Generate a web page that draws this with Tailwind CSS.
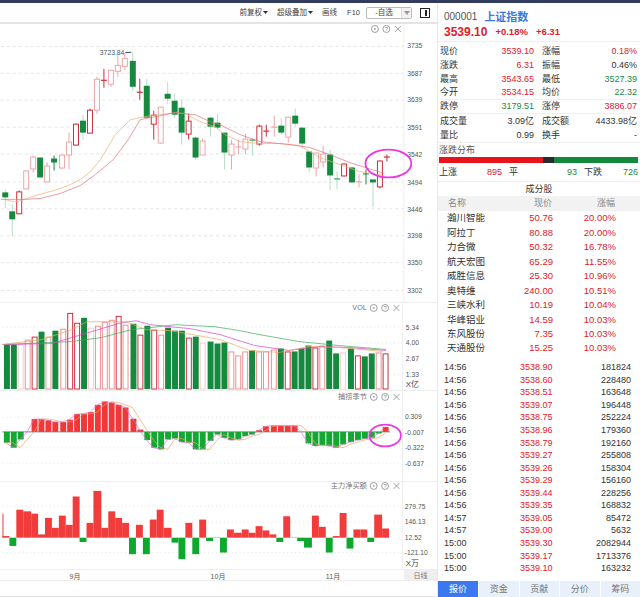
<!DOCTYPE html>
<html lang="en">
<head>
<meta charset="UTF-8">
<title>上证指数</title>
<script src="https://cdn.jsdelivr.net/npm/@tailwindcss/browser@4"></script>
</head>
<body class="bg-white overflow-hidden">
<div class="w-[640px] h-[597px] overflow-hidden flex flex-col font-['Liberation_Sans','Noto_Sans_CJK_SC',sans-serif] text-[9px] leading-none text-[#333]">
  <div class="h-[3px] shrink-0 bg-[#323c5c]"></div>
  <div class="flex flex-1 min-h-0">
    <!-- left: chart panes -->
    <div class="w-[437px] shrink-0 flex flex-col">
      <div class="h-[21px] shrink-0 border-b-2 border-[#e4e4e4] flex items-center justify-end pr-[7px] text-[7.5px] text-[#444]">
        <span class="flex items-center gap-[1px]">前复权<svg width="5" height="3"><path d="M0 0h5L2.5 3z" fill="#333"/></svg></span>
        <span class="flex items-center gap-[1px] ml-[9px]">超级叠加<svg width="5" height="3"><path d="M0 0h5L2.5 3z" fill="#333"/></svg></span>
        <span class="ml-[9px]">画线</span>
        <span class="ml-[10px]">F10</span>
        <span class="flex items-center w-[46px] h-[12px] ml-[6px] border border-[#bbb] rounded-[2px]">
          <span class="flex-1 text-center">-自选</span>
          <span class="w-[10px] h-full border-l border-[#ddd] bg-[#f2f2f2] flex items-center justify-center"><svg width="6" height="4"><path d="M0 0h6L3 4z" fill="#999"/></svg></span>
        </span>
        <svg class="ml-[8px]" width="10" height="10"><rect x=".5" y=".5" width="9" height="9" fill="none" stroke="#222"/><rect x="5" y="2" width="2" height="6" fill="#222"/></svg>
      </div>
      <svg id="main" class="block shrink-0 border-b border-[#eee]" width="437" height="279" viewBox="0 24 437 279"></svg>
      <svg id="vol" class="block shrink-0 border-b border-[#eee]" width="437" height="88" viewBox="0 303 437 88"></svg>
      <svg id="macd" class="block shrink-0 border-b border-[#eee]" width="437" height="91" viewBox="0 391 437 91"></svg>
      <svg id="flow" class="block shrink-0 border-b border-[#eee]" width="437" height="88" viewBox="0 482 437 88"></svg>
      <div class="h-[11px] shrink-0 flex border-b border-[#eee]">
        <svg id="dates" class="block" width="404" height="11" viewBox="0 570 404 11"></svg>
        <div class="flex-1 bg-[#efefef] text-[#777] text-[7px] text-center leading-[11px]">日线</div>
      </div>
      <div class="flex-1 border-b border-[#e4e4e4]"></div>
    </div>
    <!-- right: quote panel -->
    <div class="flex-1 min-w-0 border-l border-[#e8e8e8] flex flex-col">
      <div class="h-[39px] shrink-0 border-b border-[#eee] pl-[6px] pt-[8px]">
        <div class="flex items-center gap-[7px] h-[12px]">
          <span class="text-[10px] text-[#555]">000001</span>
          <span class="text-[11px] font-bold text-[#3b78e0]">上证指数</span>
        </div>
        <div class="flex items-center gap-[8px] mt-[3px] font-bold text-[#e0202c]">
          <span class="text-[12px]">3539.10</span>
          <span class="text-[9.5px]">+0.18%</span>
          <span class="text-[9.5px]">+6.31</span>
        </div>
      </div>
      <div class="pl-[2px] pr-[3px] pt-[2px] shrink-0">
        <div class="flex h-[14px] items-center justify-between"><div class="w-[94px] flex justify-between"><span>现价</span><span class="text-[#e0202c]">3539.10</span></div><div class="w-[95px] flex justify-between"><span>涨幅</span><span class="text-[#e0202c]">0.18%</span></div></div>
        <div class="flex h-[14px] items-center justify-between"><div class="w-[94px] flex justify-between"><span>涨跌</span><span class="text-[#e0202c]">6.31</span></div><div class="w-[95px] flex justify-between"><span>振幅</span><span>0.46%</span></div></div>
        <div class="flex h-[14px] items-center justify-between"><div class="w-[94px] flex justify-between"><span>最高</span><span class="text-[#e0202c]">3543.65</span></div><div class="w-[95px] flex justify-between"><span>最低</span><span class="text-[#1a8a4a]">3527.39</span></div></div>
        <div class="flex h-[14px] items-center justify-between border-b border-[#f0f0f0]"><div class="w-[94px] flex justify-between"><span>今开</span><span class="text-[#e0202c]">3534.15</span></div><div class="w-[95px] flex justify-between"><span>均价</span><span class="text-[#1a8a4a]">22.32</span></div></div>
        <div class="flex h-[14px] items-center justify-between border-b border-[#f0f0f0]"><div class="w-[94px] flex justify-between"><span>跌停</span><span class="text-[#1a8a4a]">3179.51</span></div><div class="w-[95px] flex justify-between"><span>涨停</span><span class="text-[#e0202c]">3886.07</span></div></div>
        <div class="flex h-[14px] items-center justify-between"><div class="w-[94px] flex justify-between"><span>成交量</span><span>3.09亿</span></div><div class="w-[95px] flex justify-between"><span>成交额</span><span>4433.98亿</span></div></div>
        <div class="flex h-[14px] items-center justify-between"><div class="w-[94px] flex justify-between"><span>量比</span><span>0.99</span></div><div class="w-[95px] flex justify-between"><span>换手</span><span>-</span></div></div>
      </div>
      <div class="h-[15px] shrink-0 pl-[1px] flex items-center text-[#555] border-t border-[#f0f0f0]">涨跌分布</div>
      <div class="h-[6px] shrink-0 ml-[1px] mr-[2px] flex">
        <div class="w-[104px] bg-[#e8141c]"></div>
        <div class="w-[11px] bg-[#2b2b2b]"></div>
        <div class="flex-1 bg-[#128a3a]"></div>
      </div>
      <div class="h-[19px] shrink-0 flex items-center pl-[1px] pr-[2px] border-b border-[#eee]">
        <span class="w-[63px] flex justify-between"><span>上涨</span><span class="text-[#e0202c]">895</span></span>
        <span class="w-[68px] ml-[7px] flex justify-between"><span>平</span><span class="text-[#1a8a4a]">93</span></span>
        <span class="flex-1 ml-[7px] flex justify-between"><span>下跌</span><span class="text-[#1a8a4a]">726</span></span>
      </div>
      <div class="h-[14px] shrink-0 text-center leading-[15px]">成分股</div>
      <div class="h-[15px] shrink-0 bg-[#f2f2f2] flex items-center text-[#888] pl-[10px]">
        <span class="w-[46px]">名称</span><span class="w-[58px] text-right">现价</span><span class="w-[63px] text-right">涨幅</span>
      </div>
      <div class="shrink-0 pl-[9px] text-[9.5px] text-[#e0202c]">
        <div class="flex items-center h-[14.45px]"><span class="w-[56px] text-[#333]">瀚川智能</span><span class="w-[50px] text-right">50.76</span><span class="w-[63px] text-right">20.00%</span></div>
        <div class="flex items-center h-[14.45px]"><span class="w-[56px] text-[#333]">阿拉丁</span><span class="w-[50px] text-right">80.88</span><span class="w-[63px] text-right">20.00%</span></div>
        <div class="flex items-center h-[14.45px]"><span class="w-[56px] text-[#333]">力合微</span><span class="w-[50px] text-right">50.32</span><span class="w-[63px] text-right">16.78%</span></div>
        <div class="flex items-center h-[14.45px]"><span class="w-[56px] text-[#333]">航天宏图</span><span class="w-[50px] text-right">65.29</span><span class="w-[63px] text-right">11.55%</span></div>
        <div class="flex items-center h-[14.45px]"><span class="w-[56px] text-[#333]">威胜信息</span><span class="w-[50px] text-right">25.30</span><span class="w-[63px] text-right">10.96%</span></div>
        <div class="flex items-center h-[14.45px]"><span class="w-[56px] text-[#333]">奥特维</span><span class="w-[50px] text-right">240.00</span><span class="w-[63px] text-right">10.51%</span></div>
        <div class="flex items-center h-[14.45px]"><span class="w-[56px] text-[#333]">三峡水利</span><span class="w-[50px] text-right">10.19</span><span class="w-[63px] text-right">10.04%</span></div>
        <div class="flex items-center h-[14.45px]"><span class="w-[56px] text-[#333]">华峰铝业</span><span class="w-[50px] text-right">14.59</span><span class="w-[63px] text-right">10.03%</span></div>
        <div class="flex items-center h-[14.45px]"><span class="w-[56px] text-[#333]">东风股份</span><span class="w-[50px] text-right">7.35</span><span class="w-[63px] text-right">10.03%</span></div>
        <div class="flex items-center h-[14.45px]"><span class="w-[56px] text-[#333]">天通股份</span><span class="w-[50px] text-right">15.25</span><span class="w-[63px] text-right">10.03%</span></div>
      </div>
      <div class="shrink-0 mt-[6px] pl-[6px] pr-[9px]">
        <div class="flex items-center h-[12.57px]"><span class="w-[76px]">14:56</span><span class="text-[#e0202c]">3538.90</span><span class="flex-1 text-right">181824</span></div>
        <div class="flex items-center h-[12.57px]"><span class="w-[76px]">14:56</span><span class="text-[#e0202c]">3538.60</span><span class="flex-1 text-right">228480</span></div>
        <div class="flex items-center h-[12.57px]"><span class="w-[76px]">14:56</span><span class="text-[#e0202c]">3538.51</span><span class="flex-1 text-right">163648</span></div>
        <div class="flex items-center h-[12.57px]"><span class="w-[76px]">14:56</span><span class="text-[#e0202c]">3539.07</span><span class="flex-1 text-right">196448</span></div>
        <div class="flex items-center h-[12.57px]"><span class="w-[76px]">14:56</span><span class="text-[#e0202c]">3538.75</span><span class="flex-1 text-right">252224</span></div>
        <div class="flex items-center h-[12.57px]"><span class="w-[76px]">14:56</span><span class="text-[#e0202c]">3538.96</span><span class="flex-1 text-right">179360</span></div>
        <div class="flex items-center h-[12.57px]"><span class="w-[76px]">14:56</span><span class="text-[#e0202c]">3538.79</span><span class="flex-1 text-right">192160</span></div>
        <div class="flex items-center h-[12.57px]"><span class="w-[76px]">14:56</span><span class="text-[#e0202c]">3539.27</span><span class="flex-1 text-right">255808</span></div>
        <div class="flex items-center h-[12.57px]"><span class="w-[76px]">14:56</span><span class="text-[#e0202c]">3539.26</span><span class="flex-1 text-right">158304</span></div>
        <div class="flex items-center h-[12.57px]"><span class="w-[76px]">14:56</span><span class="text-[#e0202c]">3539.29</span><span class="flex-1 text-right">156160</span></div>
        <div class="flex items-center h-[12.57px]"><span class="w-[76px]">14:56</span><span class="text-[#e0202c]">3539.44</span><span class="flex-1 text-right">228256</span></div>
        <div class="flex items-center h-[12.57px]"><span class="w-[76px]">14:56</span><span class="text-[#e0202c]">3539.35</span><span class="flex-1 text-right">168832</span></div>
        <div class="flex items-center h-[12.57px]"><span class="w-[76px]">14:57</span><span class="text-[#e0202c]">3539.05</span><span class="flex-1 text-right">85472</span></div>
        <div class="flex items-center h-[12.57px]"><span class="w-[76px]">14:57</span><span class="text-[#e0202c]">3539.00</span><span class="flex-1 text-right">5632</span></div>
        <div class="flex items-center h-[12.57px]"><span class="w-[76px]">15:00</span><span class="text-[#e0202c]">3539.30</span><span class="flex-1 text-right">2082944</span></div>
        <div class="flex items-center h-[12.57px]"><span class="w-[76px]">15:00</span><span class="text-[#e0202c]">3539.17</span><span class="flex-1 text-right">1713376</span></div>
        <div class="flex items-center h-[12.57px]"><span class="w-[76px]">15:00</span><span class="text-[#e0202c]">3539.10</span><span class="flex-1 text-right">163232</span></div>
      </div>
      <div class="mt-auto h-[16px] shrink-0 flex text-[#777] text-center leading-[16px] gap-px">
        <div class="w-[40px] bg-[#3b78f0] text-white">报价</div>
        <div class="flex-1 bg-[#e8f0fb]">资金</div>
        <div class="flex-1 bg-[#e8f0fb]">贡献</div>
        <div class="flex-1 bg-[#e8f0fb]">分价</div>
        <div class="flex-1 bg-[#e8f0fb]">筹码</div>
      </div>
    </div>
  </div>
</div>

<script>
const RED = '#c9303a', PINK = '#eda6a6', PALE = '#f8cccc', GREEN = '#158a3e', PALEG = '#b9dcc6';
const barX = i => 3.7 + 7.1 * i;
const px = x => Math.round(x) + .5;

// candle: type (r/p = hollow, g = filled), body top, body bottom, wick top, wick bottom
const candles = [
  ['g',193,198,190,209],['g',212,220,205,237],['r',192,214,191,214],['p',171,189,171,190],['p',157,169,156,173],
  ['g',158,178,158,178],['p',166,182,163,182],['g',159,163,156,171],['p',155,168,155,170],['p',142,155,133,170],
  ['r',124,145,124,146],['g',121,133,115,140],['r',110,133,109,134],['p',79,110,77,114],['r',80,81,69,88],
  ['p',70,84,70,87],['p',65,71,55,77],['p',58,66,53,70],['g',61,87,52,91],['r',92,93,79,100],
  ['g',86,118,79,118],['r',115,124,111,140],['p',107,143,107,144],['g',94,99,82,104],['g',101,115,94,118],
  ['g',108,133,100,145],['r',121,134,114,140],['g',138,158,137,160],['p',141,155,139,155],['g',118,127,117,137],
  ['g',123,128,114,130],['g',133,153,133,170],['p',144,155,140,170],['p',147,148,140,155],['p',139,149,134,155],
  ['g',140,141,139,156],['r',126,144,125,146],['r',131,132,125,137],['p',127,128,116,137],['g',126,133,118,135],
  ['p',117,137,117,143],['g',116,124,109,127],['g',128,144,128,149],['g',152,168,152,173],['p',153,168,153,177],
  ['p',154,162,146,168],['g',155,176,150,191],['g',179,180,172,190],['r',164,176,164,177],['g',168,183,168,183],
  ['p',182,183,175,188],['g',174,175,170,185],['g',180,183,180,208],['r',161,187,161,189],['r',157,158,155,162]
];
// volume: type, top (baseline 390)
const vols = [
  ['g',345],['g',345],['l',345],['p',340],['r',337],['g',332],['p',337],['g',331],['p',329],['r',313],
  ['r',323],['g',318],['l',328],['p',326],['p',322],['p',320],['r',316],['p',325],['g',324],['r',335],
  ['g',326],['r',330],['p',335],['g',328],['g',331],['g',331],['r',338],['g',337],['l',343],['g',342],
  ['g',344],['g',343],['p',352],['p',356],['p',352],['g',351],['p',352],['p',352],['p',350],['g',349],
  ['r',352],['g',352],['g',349],['g',346],['r',348],['p',346],['g',341],['g',354],['l',353],['g',349],
  ['r',356],['g',357],['g',354],['p',353],['r',354]
];
// bar ends in crop pixels (3x), converted below
const macdZ = [430,445,420,397,358,358,362,367,367,360,343,342,337,315,305,308,315,323,357,390,422,445,450,420,417,428,430,450,450,424,405,
  415,422,420,410,405,392,380,378,378,378,378,397,432,440,437,440,445,435,428,422,418,415,402,382];
const flowZ = [260,290,180,185,192,255,205,235,198,226,140,278,220,123,235,185,205,220,315,226,315,210,180,235,280,330,220,315,210,275,264,
  310,240,250,240,250,230,243,255,278,200,264,275,295,198,232,310,260,190,298,240,240,278,195,237];
const pinkMA = [[0,200],[15,200],[25,200],[40,199],[60,194],[80,186],[95,175],[113,160],[128,140],[140,120],[160,116],[175,113],[195,115],[210,122],[220,125],[240,135],[260,142],[290,145],[310,148],[330,155],[350,163],[385,174]];
const orangeMA = [[4,200],[11,202],[18,202],[26,199],[35,196],[50,192],[60,189],[70,185],[80,180],[90,172],[100,160],[115,135],[130,120],[140,118],[150,116],[160,115],[175,113],[185,114],[200,122],[215,127],[225,135],[240,142],[260,144],[280,144],[300,146],[320,158],[340,165],[360,172],[385,176]];
const volGreen = [[0,345],[70,342],[100,338],[130,330],[175,325],[215,327],[240,331],[260,335],[300,342],[340,346],[388,350]];
const volPink = [[0,345],[50,344],[80,335],[120,323],[135,321],[150,325],[190,329],[220,335],[255,346],[290,351],[320,347],[350,348],[388,351]];
const volOrange = [[0,345],[40,340],[70,330],[85,322],[125,322],[145,330],[170,331],[220,340],[250,351],[280,353],[310,347],[340,348],[385,352]];

const line = pts => 'M' + pts.map(p => p[0] + ' ' + p[1]).join('L');
const ma = (pts, c) => `<path d="${line(pts)}" fill="none" stroke="${c}" stroke-width=".7"/>`;
const grid = (ys, dash) => ys.map(y => `<line x1="0" x2="404" y1="${y + .5}" y2="${y + .5}" stroke="#e4e4e4" stroke-dasharray="${dash}"/>`).join('');
const axis = (rows, x = 408) => rows.map(r => `<text x="${x}" y="${r[1] + 2.5}" font-size="6.8" fill="#555">${r[0]}</text>`).join('');
const axisLine = (a, b) => `<line x1="404.5" x2="404.5" y1="${a}" y2="${b}" stroke="#eee"/>`;
function tools(y, label, lx) {
  let s = `<g fill="none" stroke="#888" stroke-width=".8"><circle cx="375.5" cy="${y}" r="3.5"/><circle cx="375.5" cy="${y}" r=".6"/><circle cx="387" cy="${y}" r="3.5"/><path d="M395.5 ${y - 3}l6 6m0 -6l-6 6"/></g><text x="387" y="${y + 2.2}" font-size="6" text-anchor="middle" fill="#888">?</text>`;
  if (label) s += `<text x="${lx}" y="${y + 2.5}" font-size="7.3" text-anchor="end" fill="#777">${label}</text>`;
  return s;
}

// main
let m = grid([46,73,100,127,154,182,209,236,263,291], '3 3') + axisLine(24, 303) + tools(29);
candles.forEach((c, i) => {
  const x = px(barX(i));
  const col = c[0] === 'g' ? GREEN : c[0] === 'r' ? RED : PINK;
  const wick = c[0] === 'g' && c[4] - c[3] > 15 ? PALEG : col;
  m += `<line x1="${x}" x2="${x}" y1="${c[3]}" y2="${c[4]}" stroke="${wick}"/>`;
  if (c[0] === 'g') m += `<rect x="${x - 3}" y="${c[1]}" width="6" height="${c[2] - c[1]}" fill="${GREEN}"/>`;
  else if (c[2] - c[1] < 2) m += `<line x1="${x - 3}" x2="${x + 3}" y1="${c[1] + .5}" y2="${c[1] + .5}" stroke="${col}" stroke-width="1.2"/>`;
  else m += `<rect x="${x - 2.5}" y="${c[1] + .5}" width="5" height="${c[2] - c[1]}" fill="#fff" stroke="${col}"/>`;
});
m += ma(orangeMA, '#e8b070') + ma(pinkMA, '#e07080');
m += `<text x="124" y="55" font-size="6.8" text-anchor="end" fill="#456">3723.84</text><path d="M125 52.5h6" stroke="#345"/>`;
m += axis([['3735',46],['3687',74],['3639',100],['3591',128],['3542',155],['3494',183],['3446',210],['3398',236],['3350',263],['3302',291]]);
m += `<ellipse cx="389" cy="164" rx="23" ry="14" fill="none" stroke="#e83ce0" stroke-width="1.8"/>`;
document.getElementById('main').innerHTML = m;

// volume
let v = grid([327,343,359,375], '1 3') + axisLine(303, 391) + tools(308, 'VOL', 368.5);
vols.forEach((b, i) => {
  const x = px(barX(i));
  if (b[0] === 'g') v += `<rect x="${x - 3}" y="${b[1]}" width="6" height="${390 - b[1]}" fill="${GREEN}"/>`;
  else v += `<rect x="${x - 2.5}" y="${b[1] + .5}" width="5" height="${389.5 - b[1]}" fill="#fff" stroke="${b[0] === 'r' ? RED : b[0] === 'p' ? '#ec9090' : PALE}"/>`;
});
v += ma(volGreen, '#3aa860') + ma(volPink, '#d840c8') + ma(volOrange, '#e8a860');
v += axis([['5.34',328],['4.00',343],['2.67',359],['1.33',375]]) + `<text x="408" y="388" font-size="8" fill="#444">X亿</text>`;
document.getElementById('vol').innerHTML = v;

// macd
let d = grid([417,448,464], '1 3') + axisLine(391, 482) + tools(397, '捕捞季节', 368.5);
const my = z => 300 + z / 3, base = my(397);
d += `<line x1="0" x2="392" y1="${base}" y2="${base}" stroke="#888"/>`;
macdZ.forEach((z, i) => {
  const y = my(z), x = px(barX(i));
  d += `<rect x="${x - 3}" y="${Math.min(y, base)}" width="6" height="${Math.abs(y - base)}" fill="${y < base ? '#f03838' : '#12a832'}"/>`;
});
const ends = macdZ.map((z, i) => [barX(i), my(z)]);
d += ma(ends, '#e070e0') + ma(ends.map((p, i) => [p[0], ends[Math.max(i - 1, 0)][1]]), '#e8a860');
d += axis([['0.309',417],['-0.007',433],['-0.322',448],['-0.637',464]], 407);
d += `<ellipse cx="387" cy="436" rx="16" ry="11" fill="none" stroke="#e83ce0" stroke-width="1.8"/>`;
document.getElementById('macd').innerHTML = d;

// main force net buying
let f = grid([506,522,553], '1 3') + axisLine(482, 570) + tools(486, '主力净买额', 368.5);
const fy = z => 450 + z / 3, fbase = fy(265);
f += `<rect x="0" y="${fy(192)}" width="1" height="${fbase - fy(192)}" fill="#f03838"/>`;
flowZ.forEach((z, i) => {
  const y = fy(z), left = Math.round(barX(i) - 3.55), right = Math.round(barX(i + 1) - 3.55);
  f += `<rect x="${left}" y="${Math.min(y, fbase)}" width="${right - left}" height="${Math.abs(y - fbase)}" fill="${y < fbase ? '#f23c3c' : '#0fa82e'}"/>`;
});
f += axis([['279.75',507],['146.13',522],['12.52',538],['-121.10',553]], 407) + `<text x="408" y="567" font-size="8" fill="#444">X万</text>`;
document.getElementById('flow').innerHTML = f;

document.getElementById('dates').innerHTML = [['9月',75],['10月',218],['11月',333]]
  .map(t => `<text x="${t[1]}" y="578.5" font-size="7" text-anchor="middle" fill="#555">${t[0]}</text>`).join('');
</script>
</body>
</html>
